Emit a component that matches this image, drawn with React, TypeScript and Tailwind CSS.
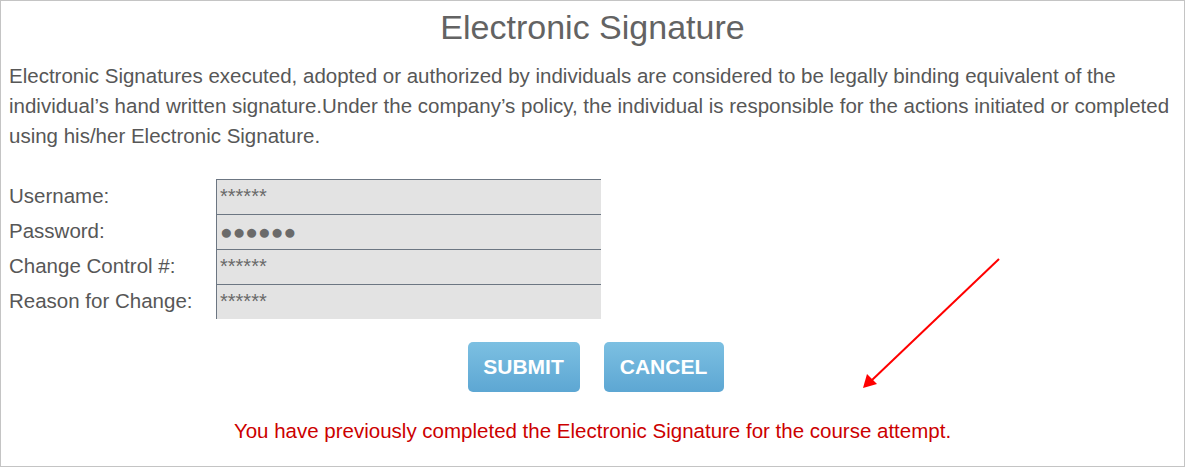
import { FC } from "react";

type FieldProps = {
    label: string;
    value: string;
    password?: boolean;
};

const Field: FC<FieldProps> = ({ label, value, password }) => {
    return (
        <div className="flex h-[35px] items-center">
            <label className="w-[207px] text-[20.5px] text-[#575757]">{label}</label>
            <div className="flex h-[35px] w-[385px] items-start border-t border-l border-[#6c7682] bg-[#e3e3e3] pl-[3px] pt-[6px]">
                {password ? (
                    <span className="text-[21px] leading-[22px] text-[#6a6a6a]">●●●●●●</span>
                ) : (
                    <span className="text-[20px] leading-[20px] text-[#6a6a6a]">{value}</span>
                )}
            </div>
        </div>
    );
};

const SigButton: FC<{ label: string; width: string }> = ({ label, width }) => {
    return (
        <button
            className={`h-[50px] ${width} rounded-[5px] bg-gradient-to-b from-[#7cc0e2] to-[#5da7d3] text-[21px] font-bold text-white`}
        >
            {label}
        </button>
    );
};

const App: FC = () => {
    return (
        <div className="relative h-[467px] w-[1185px] border border-[#c4c4c4] bg-white font-['Liberation_Sans',Arial,sans-serif]">
            <h1 className="pt-[6px] text-center text-[34px] leading-[40px] text-[#636363]">
                Electronic Signature
            </h1>

            <p className="mt-[14px] px-[8px] text-[20.5px] leading-[30px] text-[#575757]">
                Electronic Signatures executed, adopted or authorized by individuals are considered to be legally binding equivalent of the
                individual’s hand written signature.Under the company’s policy, the individual is responsible for the actions initiated or completed
                using his/her Electronic Signature.
            </p>

            <div className="mt-[28px] flex flex-col pl-[8px]">
                <Field label="Username:" value="******" />
                <Field label="Password:" value="" password />
                <Field label="Change Control #:" value="******" />
                <Field label="Reason for Change:" value="******" />
            </div>

            <div className="mt-[23px] flex justify-center gap-[24px] pl-[6px]">
                <SigButton label="SUBMIT" width="w-[112px]" />
                <SigButton label="CANCEL" width="w-[120px]" />
            </div>

            <p className="mt-[24px] text-center text-[20.5px] text-[#cc0000]">
                You have previously completed the Electronic Signature for the course attempt.
            </p>

            {/* annotation arrow */}
            <svg className="absolute left-0 top-0" width="1185" height="467">
                <line x1="998" y1="258" x2="870" y2="380" stroke="#ff0000" strokeWidth="2" />
                <polygon points="862,387 866,373 876,383" fill="#ff0000" />
            </svg>
        </div>
    );
};

export default App;
